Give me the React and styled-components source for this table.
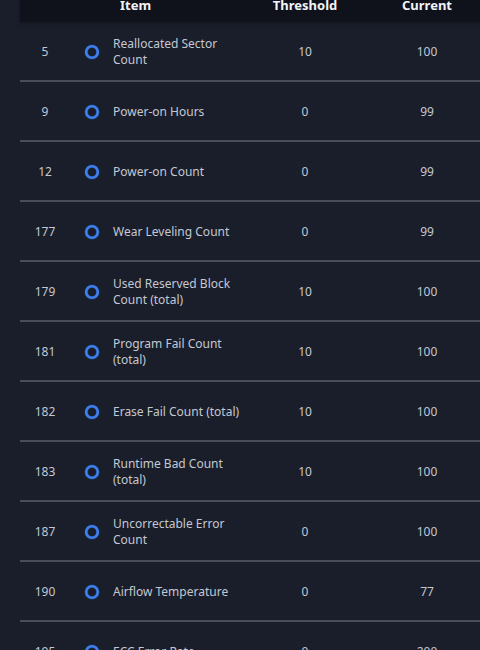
import React from 'react';
import styled, { createGlobalStyle } from 'styled-components';

const GlobalStyle = createGlobalStyle`
  html, body {
    margin: 0;
    padding: 0;
    background: #1a1e2b;
    overflow: hidden;
  }
  body {
    font-family: "Noto Sans", "Liberation Sans", sans-serif;
  }
`;

const Page = styled.div`
  width: 480px;
  height: 650px;
  overflow: hidden;
  background: #1a1e2b;
`;

const Table = styled.div`
  margin-top: -13px;
  margin-left: 20px;
  width: 480px;
`;

const Row = styled.div`
  display: grid;
  grid-template-columns: 50px 43px 135px 114px 130px;
  align-items: center;
`;

const HeaderRow = styled(Row)`
  height: 35px;
  background: #0f121a;
  box-shadow: 0 2px 4px rgba(0, 0, 0, 0.25);
`;

const HeadCell = styled.div`
  color: #f2f4f8;
  font-weight: 700;
  font-size: 13px;
  text-align: ${(p) => p.$align || 'center'};
  padding-left: ${(p) => p.$pad || 0}px;
  grid-column: ${(p) => p.$span || 'auto'};
`;

const BodyRow = styled(Row)`
  height: 58px;
  padding-top: 1px;
  box-sizing: border-box;
  height: 60px;
  border-bottom: 2px solid #474d5b;
`;

const Cell = styled.div`
  color: #c3c8d2;
  font-size: 12px;
  line-height: 15.5px;
  text-align: ${(p) => p.$align || 'center'};
`;

const IconCell = styled.div`
  display: flex;
  justify-content: center;
  align-items: center;
`;

const StatusRing = () => (
  <svg width="18" height="18" viewBox="0 0 18 18">
    <circle cx="9" cy="9" r="5.8" fill="none" stroke="#2a5cb8" strokeWidth="3.6" opacity="0.45" />
    <circle cx="9" cy="9" r="5.8" fill="none" stroke="#3e80ea" strokeWidth="2.6" />
  </svg>
);

const rows = [
  ['5', 'Reallocated Sector Count', '10', '100'],
  ['9', 'Power-on Hours', '0', '99'],
  ['12', 'Power-on Count', '0', '99'],
  ['177', 'Wear Leveling Count', '0', '99'],
  ['179', 'Used Reserved Block Count (total)', '10', '100'],
  ['181', 'Program Fail Count (total)', '10', '100'],
  ['182', 'Erase Fail Count (total)', '10', '100'],
  ['183', 'Runtime Bad Count (total)', '10', '100'],
  ['187', 'Uncorrectable Error Count', '0', '100'],
  ['190', 'Airflow Temperature', '0', '77'],
  ['195', 'ECC Error Rate', '0', '200'],
];

const App = () => {
  return (
    <>
      <GlobalStyle />
      <Page>
        <Table>
          <HeaderRow>
            <HeadCell />
            <HeadCell $span="span 2" $align="left" $pad={50}>Item</HeadCell>
            <HeadCell>Threshold</HeadCell>
            <HeadCell>Current</HeadCell>
          </HeaderRow>
          {rows.map(([id, name, threshold, current]) => (
            <BodyRow key={id}>
              <Cell>{id}</Cell>
              <IconCell>
                <StatusRing />
              </IconCell>
              <Cell $align="left">{name}</Cell>
              <Cell>{threshold}</Cell>
              <Cell>{current}</Cell>
            </BodyRow>
          ))}
        </Table>
      </Page>
    </>
  );
};

export default App;
